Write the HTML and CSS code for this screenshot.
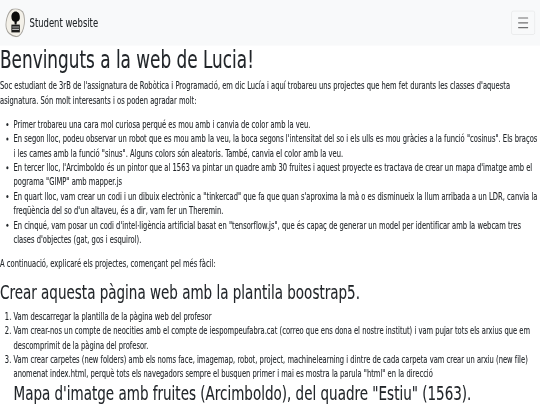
FILE: index.html
```html
<!DOCTYPE html>
<html lang="ca">
<head>
  <meta charset="UTF-8">
  <title>Student website</title>
  <link rel="stylesheet" href="styles.css">
</head>
<body>
  <div class="frame">
    <div class="page">
      <nav class="navbar">
        <a class="brand" href="#">
          <svg class="logo" width="48" height="48" viewBox="0 0 48 48">
            <path d="M16 2 C24 -1 36 1 42 6 C47 12 47 24 44 32 C41 41 34 47 27 47 C17 46 6 42 3 33 C0 24 5 8 16 2 Z" fill="#f3f0e8" stroke="#a5a29c" stroke-width="2"/>
            <path d="M25 5 C31 5 35 9 35 14 C36 19 32 22 28 22 L27 27 L23 27 L22 22 C18 22 15 19 15 14 C15 9 19 5 25 5 Z" fill="#0c0c0c"/>
            <rect x="15" y="27" width="20" height="13" fill="#1c1c1c"/>
            <path d="M17 31 H33 M17 35 H33" stroke="#b5b5b5" stroke-width="2"/>
          </svg>
          <span>Student website</span>
        </a>
        <button class="toggler">
          <svg width="30" height="30" viewBox="0 0 30 30">
            <path d="M4 7h22M4 15h22M4 23h22" stroke="rgba(0,0,0,.55)" stroke-width="2" stroke-linecap="round"/>
          </svg>
        </button>
      </nav>
      <main class="content">
        <h1>Benvinguts a la web de Lucia!</h1>
        <p>Soc estudiant de 3rB de l'assignatura de Robòtica i Programació, em dic Lucía i aquí trobareu uns projectes que hem fet durants les classes d'aquesta asignatura. Són molt interesants i os poden agradar molt:</p>
        <ul>
          <li>Primer trobareu una cara mol curiosa perqué es mou amb i canvia de color amb la veu.</li>
          <li>En segon lloc, podeu observar un robot que es mou amb la veu, la boca segons l'intensitat del so i els ulls es mou gràcies a la funció "cosinus". Els braços i les cames amb la funció "sinus". Alguns colors són aleatoris. També, canvia el color amb la veu.</li>
          <li>En tercer lloc, l'Arcimboldo és un pintor que al 1563 va pintar un quadre amb 30 fruites i aquest proyecte es tractava de crear un mapa d'imatge amb el pograma "GIMP" amb mapper.js</li>
          <li>En quart lloc, vam crear un codi i un dibuix electrònic a "tinkercad" que fa que quan s'aproxima la mà o es disminueix la llum arribada a un LDR, canvia la freqüència del so d'un altaveu, és a dir, vam fer un Theremin.</li>
          <li>En cinqué, vam posar un codi d'intel·ligència artificial basat en "tensorflow.js", que és capaç de generar un model per identificar amb la webcam tres clases d'objectes (gat, gos i esquirol).</li>
        </ul>
        <p>A continuació, explicaré els projectes, començant pel més fàcil:</p>
        <h2>Crear aquesta pàgina web amb la plantila boostrap5.</h2>
        <ol>
          <li>Vam descarregar la plantilla de la pàgina web del profesor</li>
          <li>Vam crear-nos un compte de neocities amb el compte de iespompeufabra.cat (correo que ens dona el nostre institut) i vam pujar tots els arxius que em descomprimit de la pàgina del profesor.</li>
          <li>Vam crear carpetes (new folders) amb els noms face, imagemap, robot, project, machinelearning i dintre de cada carpeta vam crear un arxiu (new file) anomenat index.html, perquè tots els navegadors sempre el busquen primer i mai es mostra la parula "html" en la direcció</li>
        </ol>
        <h2 class="sub">Mapa d'imatge amb fruites (Arcimboldo), del quadre "Estiu" (1563).</h2>
      </main>
    </div>
  </div>
</body>
</html>
```

FILE: styles.css
```css
* {
  box-sizing: border-box;
}

html, body {
  margin: 0;
  overflow: hidden;
}

.frame {
  width: 540px;
  height: 405px;
  overflow: hidden;
}

/* The whole page is laid out at 1280x675 and squeezed into the 540x405 window */
.page {
  width: 1280px;
  height: 675px;
  overflow: hidden;
  transform: scale(0.421875, 0.6);
  transform-origin: 0 0;
  filter: blur(0.5px);
  font-family: "DejaVu Sans", sans-serif;
  font-size: 16px;
  line-height: 24px;
  color: #212529;
  background-color: #fff;
  -webkit-text-stroke: 0.15px #212529;
}

/* Navbar */
.navbar {
  height: 76px;
  background-color: #f8f9fa;
  display: flex;
  justify-content: space-between;
  align-items: center;
  padding: 0 12px;
}

.brand {
  display: flex;
  align-items: center;
  gap: 10px;
  color: #212529;
  font-size: 20px;
  text-decoration: none;
}

.toggler {
  width: 56px;
  height: 40px;
  padding: 0;
  background: none;
  border: 1px solid rgba(0, 0, 0, 0.1);
  border-radius: 4px;
  display: flex;
  justify-content: center;
  align-items: center;
}

/* Content */
h1, h2 {
  font-weight: 500;
  margin: 0 0 8px;
}

h1 {
  font-size: 40px;
  line-height: 48px;
}

h2 {
  font-size: 32px;
  line-height: 38px;
  margin-bottom: 10px;
}

.sub {
  margin-bottom: 0;
  padding-left: 32px;
}

p, li {
  letter-spacing: 0.03px;
}

p {
  margin: 0 0 16px;
}

ul, ol {
  margin: 0 0 16px;
  padding-left: 32px;
}

ol {
  margin-bottom: 0;
}
```
